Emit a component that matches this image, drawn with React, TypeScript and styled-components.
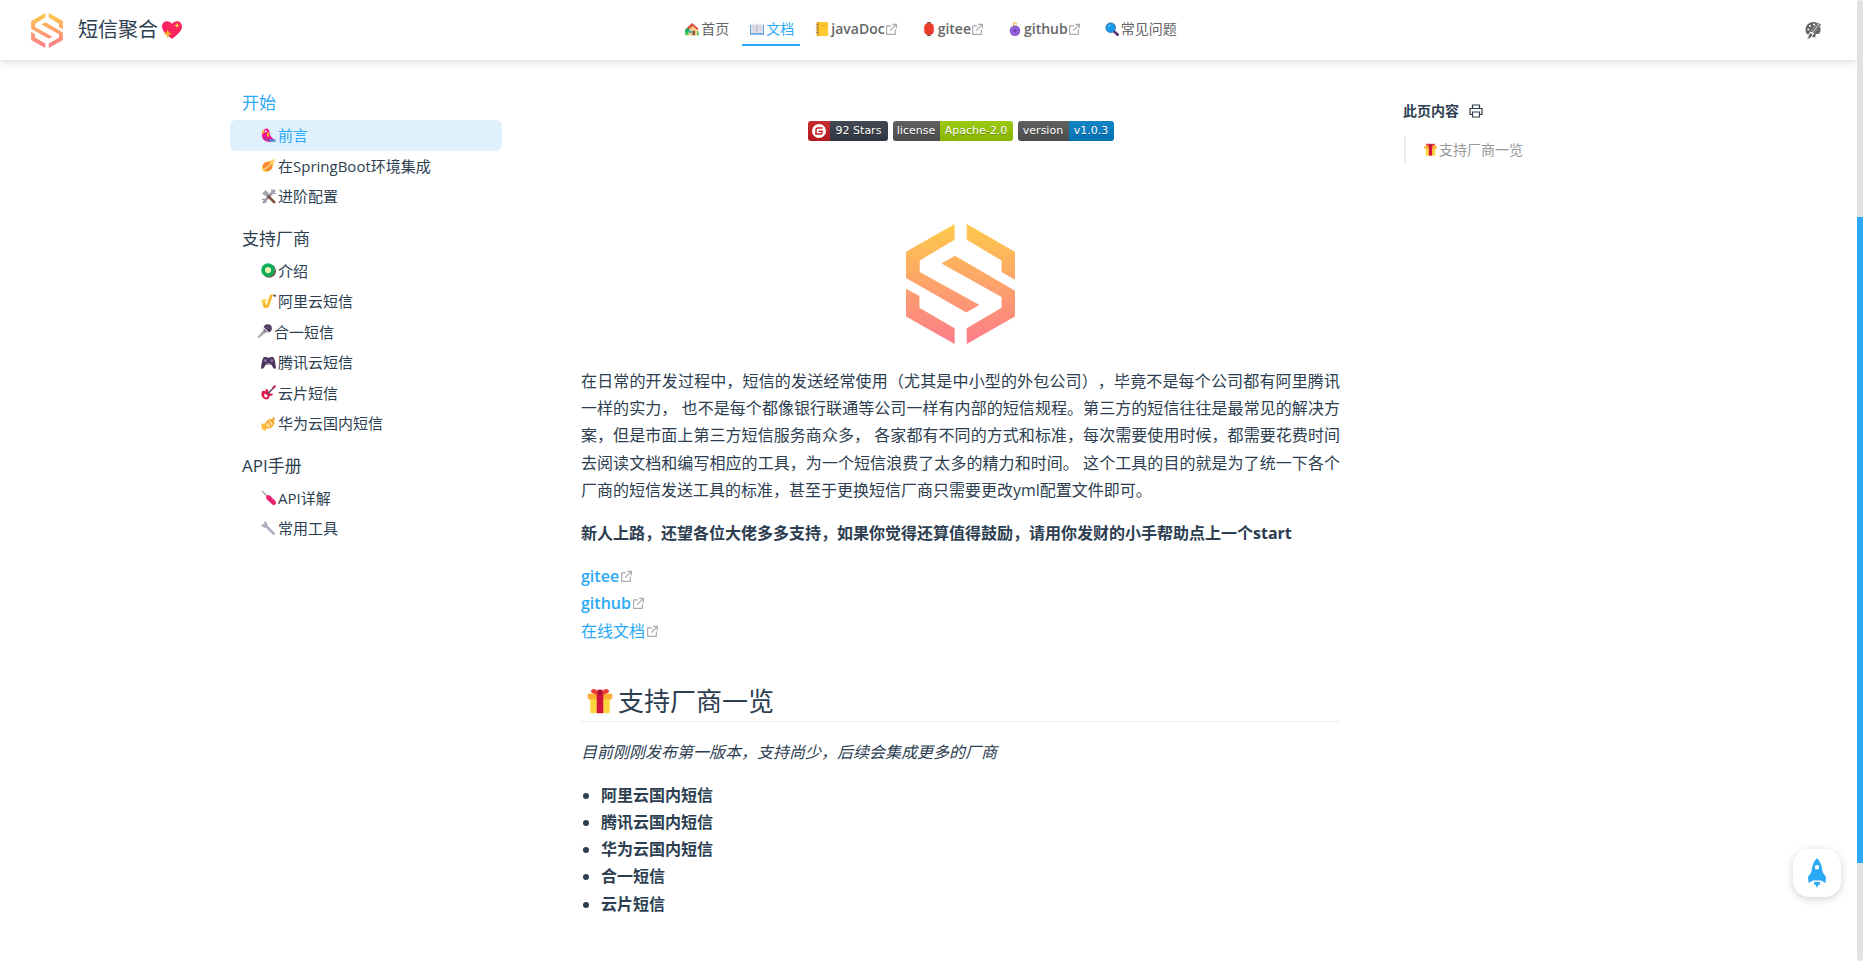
import React from 'react';
import styled, { createGlobalStyle, css } from 'styled-components';

const accent = '#2ca9f5';
const ink = '#2c3e50';

const GlobalStyle = createGlobalStyle`
  *, *::before, *::after { box-sizing: border-box; }
  html { scrollbar-width: none; }
  body {
    margin: 0;
    background: #fff;
    color: ${ink};
    font-family: "Open Sans", "Noto Sans CJK SC", sans-serif;
    font-size: 16px;
    line-height: 1.7;
    text-spacing-trim: space-all;
  }
  a { color: inherit; text-decoration: none; }
  button { border: 0; padding: 0; background: none; cursor: pointer; font: inherit; }
  svg { display: block; flex: none; }
`;

/* ---------- drawings ---------- */

const Logo = ({ width, height, id }: { width: number; height: number; id: string }) => (
  <svg width={width} height={height} viewBox="80 42 325 358" aria-hidden="true">
    <defs>
      <linearGradient id={id} gradientUnits="userSpaceOnUse" x1="0" y1="42" x2="0" y2="400">
        <stop offset="0" stopColor="#fdca4a" />
        <stop offset="1" stopColor="#fc7c8b" />
      </linearGradient>
    </defs>
    <g fill={`url(#${id})`}>
      <path d="M225 42V89L121 151V185L299 284L260 306L80 203V125Z" />
      <path d="M261 42L405 125V208L365 185V151L261 89Z" />
      <path d="M226 137L405 241V318L261 400V353L365 292V260L186 160Z" />
      <path d="M80 235L120 257V292L225 353V400L80 318Z" />
    </g>
  </svg>
);

const drawings: Record<string, React.ReactNode> = {
  heart: (
    <>
      <path fill="#f8235f" d="M8 15C3 11.500 0 8.500 0 5.200C0 .5 5.500-.5 8 3C10.500-.5 16 .5 16 5.200C16 8.500 13 11.500 8 15Z" />
      <path fill="#ffb02e" d="M4.500 7.500l1 2.500L8 11L5.500 12L4.500 14.500L3.500 12L1 11L3.500 10Z" />
      <path fill="#fcd53f" d="M12 2l.6 1.700L14.300 4.300L12.600 5L12 6.600L11.400 5L9.700 4.300L11.400 3.700Z" />
    </>
  ),
  house: (
    <>
      <path fill="#44c95a" d="M0 11Q2 7 4 10H14Q16 10 16 15H0Z" />
      <path fill="#ffcf8a" d="M4 7L9 2.500L14 7V15H4Z" />
      <path fill="#d9503e" d="M8 1L15.500 7.500L14 9L9 4.500L4 9L1.500 7.500Z" />
      <path fill="#8c5543" d="M8.500 10H11.500V15H8.500Z" />
      <path fill="#00a6ed" d="M5 10H7.500V12.500H5Z" />
      <circle cx="2.500" cy="9.500" r="2.500" fill="#1fae6b" />
    </>
  ),
  book: (
    <>
      <path fill="#4a9be6" d="M0 3.500H16V14.500H0Z" />
      <path fill="#e5e4ec" d="M1 2Q5 1 8 3Q11 1 15 2V13Q11 12 8 13.500Q5 12 1 13Z" />
      <path d="M8 3V13.500" stroke="#a59fb5" />
      <path d="M3 5H6M3 7H6M3 9H6M10 5H13M10 7H13M10 9H13" stroke="#c5bfd0" strokeWidth=".8" />
    </>
  ),
  ledger: (
    <>
      <rect x="2" y="0" width="13" height="16" rx="1" fill="#fcc92f" />
      <rect x="2" y="0" width="2.500" height="16" fill="#e7a020" />
      <path d="M1 3H4M1 6H4M1 9H4M1 12H4" stroke="#8a7c68" strokeWidth=".9" />
      <path d="M7 4H13" stroke="#e39d23" />
    </>
  ),
  lantern: (
    <>
      <path d="M6 0H10V2H6ZM6 14H10V16H6Z" fill="#70483c" />
      <rect x="2.500" y="1.500" width="11" height="13" rx="4.500" fill="#ef3d2c" />
      <path d="M6.500 2V14M9.500 2V14" stroke="#d9352a" strokeWidth=".8" />
    </>
  ),
  yoyo: (
    <>
      <path d="M8 5Q5 2 7 1T10 3" fill="none" stroke="#f0b93c" strokeWidth="1.300" />
      <circle cx="8" cy="10" r="6" fill="#8856cf" />
      <circle cx="8" cy="10" r="3.600" fill="none" stroke="#a87de6" strokeWidth=".8" />
      <circle cx="8" cy="10" r="1.500" fill="#6a42a8" />
    </>
  ),
  search: (
    <>
      <path d="M9.500 10L14.500 14.500" stroke="#533566" strokeWidth="3" strokeLinecap="round" />
      <circle cx="6.500" cy="6.500" r="5.500" fill="#1998e8" stroke="#2f6ea0" />
      <path d="M3.500 6Q4 3.500 6.500 3.500" fill="none" stroke="#7fd0ff" />
    </>
  ),
  parrot: (
    <>
      <path fill="#f3128c" d="M4 1Q8-1 9 4Q9 9 14 12L16 14L9 15Q1 14 1 8Q1 4 4 1Z" />
      <path fill="#ffb02e" d="M3 2Q0 3 1 6L4 5ZM7 4Q10 5 8 10Q5 8 7 4Z" />
      <path fill="#29a8e0" d="M9 12L16 12.500L15 14.500H9Z" />
      <path fill="#8c3f9d" d="M3 8Q5 12 9 12L8 14Q3 13 3 8Z" />
      <circle cx="5" cy="3.500" r="1" fill="#fff" />
    </>
  ),
  comet: (
    <>
      <path fill="#ffcc4a" d="M15 1L12 11Q9 15 4 15Q0 13 1 9Q3 5 7 4Z" />
      <circle cx="7" cy="9" r="5" fill="#f78b35" />
      <path d="M1 13Q8 11 14 2" fill="none" stroke="#ffd98c" strokeWidth="1.300" />
    </>
  ),
  tools: (
    <>
      <path d="M14 2L3 14" stroke="#9a97a8" strokeWidth="2.600" strokeLinecap="round" />
      <path d="M12 0L11 4L16 5M1 11L5 11L5 15" fill="none" stroke="#aaa6b6" strokeWidth="1.600" />
      <path d="M6 6L14 14" stroke="#80503c" strokeWidth="3" strokeLinecap="round" />
      <path d="M1 5L5 1L9 5L6 8Z" fill="#a8a5b3" />
    </>
  ),
  kiwi: (
    <>
      <circle cx="8.700" cy="8.500" r="7.300" fill="#755348" />
      <circle cx="7.500" cy="7.500" r="7.300" fill="#12b35f" />
      <circle cx="7.500" cy="7.500" r="4.300" fill="none" stroke="#075c36" strokeWidth=".8" strokeDasharray="1 2" />
      <circle cx="7.500" cy="7.500" r="3.300" fill="#e5f7b3" />
    </>
  ),
  sax: (
    <>
      <path d="M11 1.500L7.500 12Q4.500 15.500 3.500 12L3 7" fill="none" stroke="#f9b529" strokeWidth="3" />
      <path d="M10 1.500H14.500" stroke="#f9b529" strokeWidth="1.600" />
      <path d="M0 6.500L6 5L5 10L1.500 10Z" fill="#fcd34e" />
      <path d="M13.500 1L15.800 2.500" stroke="#5d5a73" strokeWidth="2" />
    </>
  ),
  mic: (
    <>
      <path d="M8 5L11 8L2 15L.5 14Z" fill="#a5a3ad" />
      <circle cx="11.500" cy="4.500" r="4.300" fill="#4b3b62" />
      <path d="M7 4L12 9" stroke="#ceccd8" strokeWidth="1.500" />
      <path d="M10 2L14 6M12.500 1.500L9.500 5" stroke="#77658e" strokeWidth=".7" />
    </>
  ),
  gamepad: (
    <>
      <path fill="#4b345f" d="M3 2H6L7 3H9L10 2H13Q15 4 16 14Q14 16 12 12L11 10H5L4 12Q2 16 0 14Q1 4 3 2Z" />
      <circle cx="4.500" cy="6" r="1.500" fill="#9075a5" />
      <circle cx="11.500" cy="6" r="1.500" fill="#9075a5" />
      <path d="M6 9H10" stroke="#9c85af" />
    </>
  ),
  guitar: (
    <>
      <path fill="#e5184e" d="M1 7Q3 5 5 7L5 4L7.500 5L8 8L11 9.500L12 8.500L12.500 11L9 12Q9 15.500 5 15.500Q-1 13.500 1 7Z" />
      <path fill="#fff0f2" d="M4 9L7.500 11.500L5.500 13.500Q2 12.500 4 9Z" />
      <path d="M6.500 10L14 2.500" stroke="#65455e" strokeWidth="1.600" />
      <path d="M12.500 3.500L15.500 .8" stroke="#c22c55" strokeWidth="2.200" />
    </>
  ),
  trumpet: (
    <>
      <path d="M2 12L14 3" stroke="#f39d25" strokeWidth="2.400" />
      <path fill="#ffc043" d="M0 8Q4 9 7 7L8 9Q5 12 5 16L1 14Z" />
      <ellipse cx="9" cy="8.500" rx="5" ry="3.500" transform="rotate(-40 9 8.500)" fill="#ffd588" stroke="#f9a72a" strokeWidth="1.600" />
      <path d="M7 5L11 11M9.500 3.500L13.500 8M12.500 1L15 3" stroke="#ec9620" />
    </>
  ),
  screwdriver: (
    <>
      <path d="M1 1L8 8" stroke="#a8a5b5" strokeWidth="1.600" />
      <path d="M8 8L13.500 13.500" stroke="#ea2470" strokeWidth="5" strokeLinecap="round" />
      <path d="M8 9L13 14" stroke="#c4165c" />
    </>
  ),
  wrench: (
    <>
      <path d="M4 4L13.500 13.500" stroke="#aeabbc" strokeWidth="2.800" strokeLinecap="round" />
      <path d="M4 .8L6 4L4 6.200L.8 4" fill="none" stroke="#aeabbc" strokeWidth="2.200" />
    </>
  ),
  gift: (
    <>
      <path fill="#fcd53f" d="M2 6H14V15.500H2Z" />
      <path fill="#ffad31" d="M.5 3.500H15.500V7H.5Z" />
      <path fill="#ee3a32" d="M8 4Q2 4 2.500 1.500Q4-1 8 3Q12-1 13.500 1.500Q14 4 8 4Z" />
      <path fill="#d3123f" d="M6 3H10V15.500H6Z" />
      <path fill="#a81236" d="M6.500 1H9.500V4H6.500Z" />
    </>
  ),
};

const Emoji = ({ name, size }: { name: string; size: number }) => (
  <svg width={size} height={size} viewBox="0 0 16 16" aria-hidden="true">
    {drawings[name]}
  </svg>
);

const ExternalMark = () => (
  <svg width="13" height="13" viewBox="0 0 100 100" fill="#aaa" aria-hidden="true">
    <path d="M18 92H78A6 6 0 0 0 84 86V50H75V83H17V26H47V17H14A6 6 0 0 0 8 23V86A6 6 0 0 0 14 92Z" />
    <path d="M43 62L83 22V43H92V6H56V15H76L36 55Z" />
  </svg>
);

/* ---------- navigation bar ---------- */

const Header = styled.header`
  position: sticky;
  top: 0;
  z-index: 2;
  display: grid;
  grid-template-columns: 1fr auto 1fr;
  align-items: center;
  height: 60px;
  margin-right: 6px;
  padding: 0 36px 0 31px;
  background: #fff;
  box-shadow: 0 2px 8px rgba(0, 0, 0, 0.15);
`;

const Brand = styled.a`
  display: flex;
  align-items: center;
  justify-self: start;
  font-size: 20px;
  white-space: nowrap;
`;

const BrandName = styled.span`
  margin: 0 4px 0 15px;
`;

const Nav = styled.nav`
  display: flex;
  gap: 7px;
  margin-left: 8px;
`;

const NavLink = styled.a<{ $active?: boolean; $external?: boolean }>`
  display: flex;
  align-items: center;
  height: 31px;
  padding: 0 ${p => (p.$external ? 9 : 6)}px 0 6px;
  border-bottom: 2px solid ${p => (p.$active ? accent : 'transparent')};
  color: ${p => (p.$active ? accent : '#666')};
  font-size: 14px;
  font-weight: ${p => (p.$external ? 600 : 400)};
  white-space: nowrap;
`;

const IconCell = styled.span<{ $width: number }>`
  display: flex;
  flex: none;
  justify-content: center;
  width: ${p => p.$width}px;
`;

const ThemeButton = styled.button`
  justify-self: end;
  color: #666;
`;

/* ---------- page columns ---------- */

const Shell = styled.div`
  padding-right: 6px;
`;

const Columns = styled.div`
  display: grid;
  grid-template-columns: 272px minmax(0, 1fr) 224px;
  max-width: 1397px;
  margin: 0 auto;
`;

const Sidebar = styled.aside`
  padding-top: 26px;
`;

const Group = styled.section`
  margin-bottom: 10px;
`;

const GroupTitle = styled.h3<{ $active?: boolean }>`
  margin: 0;
  padding-left: 12px;
  color: ${p => (p.$active ? accent : ink)};
  font-size: 17px;
  font-weight: 400;
  line-height: 34px;
`;

const PlainList = styled.ul`
  margin: 0;
  padding: 0;
  list-style: none;
`;

const SideLink = styled.a<{ $active?: boolean; $tight?: boolean }>`
  display: flex;
  align-items: center;
  padding: 4px 8px 4px ${p => (p.$tight ? 24 : 28)}px;
  border-radius: 6px;
  font-size: 15px;
  line-height: 1.5;
  ${p => p.$active && css`
    background: #def1fc;
    color: ${accent};
  `}
`;

const Article = styled.main`
  margin: 0 63px 0 79px;
  padding: 61px 0 40px;
`;

const Paragraph = styled.p`
  margin: 0 0 16px;
  text-align: justify;
`;

const Badges = styled.div`
  display: flex;
  align-items: center;
  justify-content: center;
  gap: 5px;
  margin-bottom: 83px;
`;

const Badge = styled.a`
  display: flex;
  height: 20px;
  overflow: hidden;
  border-radius: 3px;
  color: #fff;
  font-family: "DejaVu Sans", sans-serif;
  font-size: 11px;
  line-height: 20px;
  text-shadow: 0 1px 0 rgba(1, 1, 1, 0.3);
`;

const BadgePart = styled.span<{ $color: string; $width: number }>`
  display: flex;
  align-items: center;
  justify-content: center;
  width: ${p => p.$width}px;
  background: linear-gradient(rgba(190, 190, 190, 0.1), rgba(0, 0, 0, 0.1)) ${p => p.$color};
  white-space: nowrap;
`;

const Emblem = styled.div`
  display: flex;
  justify-content: center;
  margin-bottom: 24px;
`;

const Links = styled.div`
  display: flex;
  flex-direction: column;
  align-items: flex-start;
  margin-bottom: 32px;
`;

const TextLink = styled.a<{ $bold?: boolean }>`
  display: flex;
  align-items: center;
  gap: 1px;
  color: ${accent};
  font-weight: ${p => (p.$bold ? 600 : 400)};
`;

const SectionTitle = styled.h2`
  display: flex;
  align-items: center;
  gap: 5px;
  margin: 0 0 17px;
  padding: 4px 0 0 6px;
  border-bottom: 1px solid #eaecef;
  font-size: 26px;
  font-weight: 400;
  line-height: 40px;
`;

const VendorList = styled.ul`
  margin: 0;
  padding-left: 20px;
  font-weight: 700;
`;

const Toc = styled.aside`
  padding-top: 37px;
  font-size: 14px;
  line-height: 27px;
`;

const TocHeading = styled.div`
  display: flex;
  align-items: center;
  gap: 10px;
  margin-bottom: 12px;
  font-weight: 700;
  button { color: ${ink}; }
`;

const TocLink = styled.a`
  display: flex;
  align-items: center;
  margin-left: 1px;
  padding-left: 16px;
  border-left: 2px solid #eaecef;
  color: #999;
`;

/* ---------- overlays ---------- */

const ScrollTrack = styled.div`
  position: fixed;
  top: 0;
  right: 0;
  bottom: 0;
  z-index: 3;
  display: grid;
  grid-template-rows: 217fr 646fr 98fr;
  width: 6px;
  border-radius: 3px;
  background: #e2e2e2;
`;

const ScrollThumb = styled.div`
  grid-row: 2;
  background: ${accent};
`;

const TopButton = styled.button`
  position: fixed;
  right: 22px;
  bottom: 64px;
  z-index: 2;
  display: grid;
  place-items: center;
  width: 48px;
  height: 48px;
  border-radius: 16px;
  background: #fff;
  box-shadow: 0 2px 8px rgba(0, 0, 0, 0.18);
`;

/* ---------- content ---------- */

const navItems = [
  { icon: 'house', text: '首页' },
  { icon: 'book', text: '文档', active: true },
  { icon: 'ledger', text: 'javaDoc', external: true },
  { icon: 'lantern', text: 'gitee', external: true },
  { icon: 'yoyo', text: 'github', external: true },
  { icon: 'search', text: '常见问题' },
];

const groups = [
  {
    title: '开始',
    active: true,
    items: [
      { icon: 'parrot', text: '前言', active: true },
      { icon: 'comet', text: '在SpringBoot环境集成' },
      { icon: 'tools', text: '进阶配置' },
    ],
  },
  {
    title: '支持厂商',
    items: [
      { icon: 'kiwi', text: '介绍' },
      { icon: 'sax', text: '阿里云短信' },
      { icon: 'mic', text: '合一短信', tight: true },
      { icon: 'gamepad', text: '腾讯云短信' },
      { icon: 'guitar', text: '云片短信' },
      { icon: 'trumpet', text: '华为云国内短信' },
    ],
  },
  {
    title: 'API手册',
    items: [
      { icon: 'screwdriver', text: 'API详解' },
      { icon: 'wrench', text: '常用工具' },
    ],
  },
] as {
  title: string;
  active?: boolean;
  items: { icon: string; text: string; active?: boolean; tight?: boolean }[];
}[];

const vendors = ['阿里云国内短信', '腾讯云国内短信', '华为云国内短信', '合一短信', '云片短信'];

export default function App() {
  return (
    <>
      <GlobalStyle />
      <Header>
        <Brand href="#">
          <Logo width={32} height={35} id="brand-fill" />
          <BrandName>短信聚合</BrandName>
          <Emoji name="heart" size={20} />
        </Brand>
        <Nav aria-label="主导航">
          {navItems.map(item => (
            <NavLink key={item.text} href="#" $active={item.active} $external={item.external}>
              <IconCell $width={18}><Emoji name={item.icon} size={14} /></IconCell>
              {item.text}
              {item.external && <ExternalMark />}
            </NavLink>
          ))}
        </Nav>
        <ThemeButton type="button" aria-label="主题">
          <svg width="16" height="18" viewBox="0 0 16 18">
            <path fill="currentColor" d="M8 1Q12 .5 14 3.500Q16 7 15.500 10Q15 13 12.500 13H11Q10 14 10.500 15.500Q10 17 8.500 16L5 15Q0 13 .5 8Q1 2 8 1Z" />
            <g fill="#fff">
              <circle cx="3.300" cy="8.500" r="1" />
              <circle cx="5" cy="5" r="1" />
              <circle cx="9" cy="3.500" r="1" />
            </g>
            <path d="M15.500 1L3.500 16.500" stroke="#fff" strokeWidth="4" />
            <path d="M13.500 2L6.500 11M15.500 3L8.500 12" stroke="currentColor" strokeWidth="1.500" />
            <path d="M2 17.500Q4 16 4 14L5.500 12L7.500 13.500L6 16Q4.500 18 2 17.500Z" fill="currentColor" />
          </svg>
        </ThemeButton>
      </Header>

      <Shell>
        <Columns>
          <Sidebar>
            {groups.map(group => (
              <Group key={group.title}>
                <GroupTitle $active={group.active}>{group.title}</GroupTitle>
                <PlainList>
                  {group.items.map(item => (
                    <li key={item.text}>
                      <SideLink href="#" $active={item.active} $tight={item.tight}>
                        <IconCell $width={20}><Emoji name={item.icon} size={15} /></IconCell>
                        {item.text}
                      </SideLink>
                    </li>
                  ))}
                </PlainList>
              </Group>
            ))}
          </Sidebar>

          <Article>
            <Badges>
              <Badge href="#">
                <BadgePart $color="#c71d23" $width={22}>
                  <svg width="14" height="14" viewBox="0 0 14 14" aria-hidden="true">
                    <circle cx="7" cy="7" r="7" fill="#fff" />
                    <path d="M10.500 4H6Q4 4 4 6V10H8.500Q10 10 10 8.500V7.200H6.500" fill="none" stroke="#c71d23" strokeWidth="1.500" />
                  </svg>
                </BadgePart>
                <BadgePart $color="#353c48" $width={58}>92 Stars</BadgePart>
              </Badge>
              <Badge href="#">
                <BadgePart $color="#555" $width={47}>license</BadgePart>
                <BadgePart $color="#97ca00" $width={73}>Apache-2.0</BadgePart>
              </Badge>
              <Badge href="#">
                <BadgePart $color="#555" $width={51}>version</BadgePart>
                <BadgePart $color="#007ec6" $width={45}>v1.0.3</BadgePart>
              </Badge>
            </Badges>
            <Emblem><Logo width={109} height={120} id="emblem-fill" /></Emblem>
            <Paragraph>
              在日常的开发过程中，短信的发送经常使用（尤其是中小型的外包公司），毕竟不是每个公司都有阿里腾讯一样的实力， 也不是每个都像银行联通等公司一样有内部的短信规程。第三方的短信往往是最常见的解决方案，但是市面上第三方短信服务商众多， 各家都有不同的方式和标准，每次需要使用时候，都需要花费时间去阅读文档和编写相应的工具，为一个短信浪费了太多的精力和时间。 这个工具的目的就是为了统一下各个厂商的短信发送工具的标准，甚至于更换短信厂商只需要更改yml配置文件即可。
            </Paragraph>
            <Paragraph>
              <strong>新人上路，还望各位大佬多多支持，如果你觉得还算值得鼓励，请用你发财的小手帮助点上一个start</strong>
            </Paragraph>
            <Links>
              <TextLink href="#" $bold>gitee<ExternalMark /></TextLink>
              <TextLink href="#" $bold>github<ExternalMark /></TextLink>
              <TextLink href="#">在线文档<ExternalMark /></TextLink>
            </Links>
            <SectionTitle><Emoji name="gift" size={26} />支持厂商一览</SectionTitle>
            <Paragraph><em>目前刚刚发布第一版本，支持尚少，后续会集成更多的厂商</em></Paragraph>
            <VendorList>
              {vendors.map(name => <li key={name}>{name}</li>)}
            </VendorList>
          </Article>

          <Toc>
            <TocHeading>
              此页内容
              <button type="button" aria-label="打印">
                <svg width="14" height="14" viewBox="0 0 14 14" fill="none" stroke="currentColor" strokeWidth="1.200">
                  <path d="M3.500 4.500V1H10.500V4.500M3.500 10.500H1V4.500H13V10.500H10.500M3.500 8H10.500V13H3.500Z" />
                </svg>
              </button>
            </TocHeading>
            <TocLink href="#">
              <IconCell $width={17}><Emoji name="gift" size={13} /></IconCell>
              支持厂商一览
            </TocLink>
          </Toc>
        </Columns>
      </Shell>

      <TopButton type="button" aria-label="返回顶部">
        <svg width="20" height="32" viewBox="0 0 20 32" fill={accent}>
          <path fillRule="evenodd" d="M10 1Q15 6 15.500 15L19 20L18.500 26L14 23.500H6L1.500 26L1 20L4.500 15Q5 6 10 1ZM10 8A2.200 2.200 0 1 0 10 12.400A2.200 2.200 0 1 0 10 8Z" />
          <path d="M7 25H13V28L11.500 27.500L10 31L8.500 27.500L7 28Z" />
        </svg>
      </TopButton>
      <ScrollTrack aria-hidden="true"><ScrollThumb /></ScrollTrack>
    </>
  );
}
